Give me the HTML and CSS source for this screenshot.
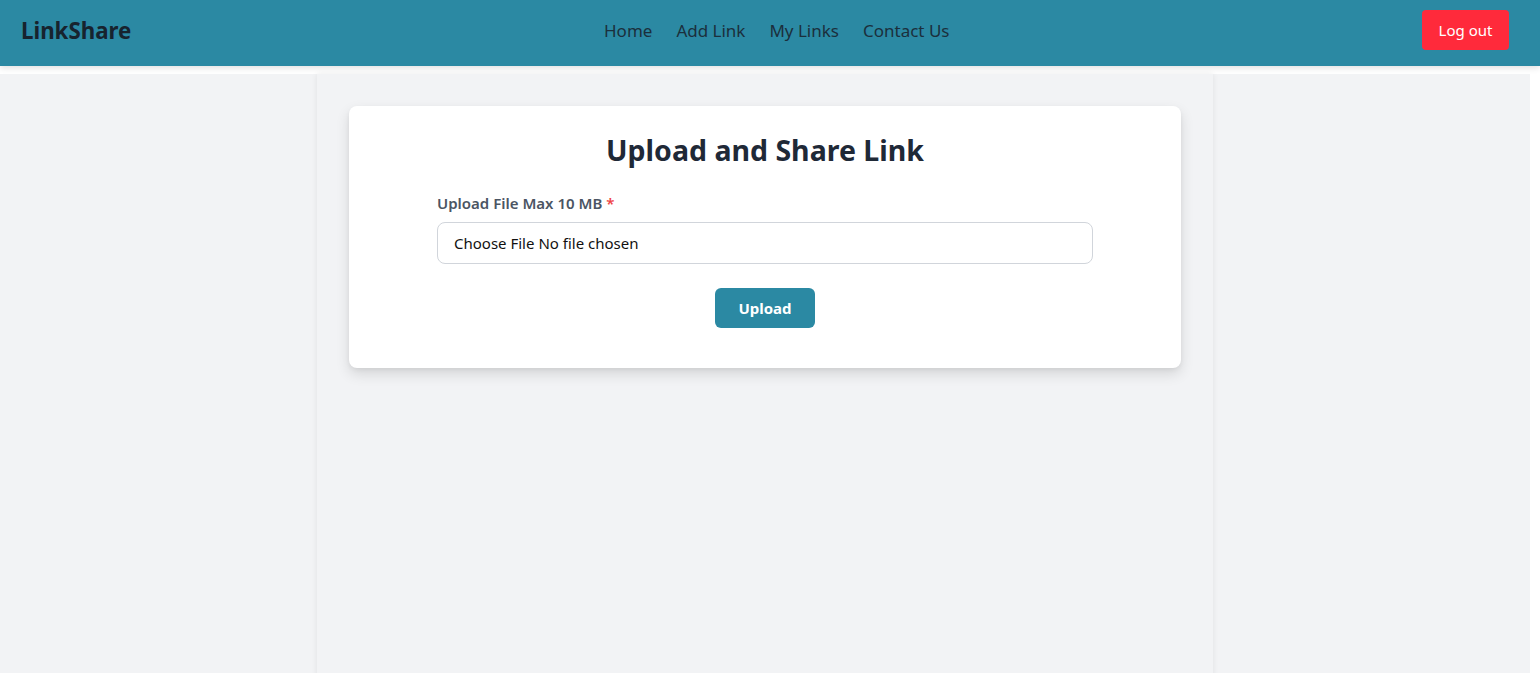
FILE: index.html
```html
<!DOCTYPE html>
<html lang="en">
<head>
<meta charset="utf-8">
<title>LinkShare</title>
<link rel="stylesheet" href="styles.css">
</head>
<body>
<header class="topbar">
  <div class="brand">LinkShare</div>
  <nav class="nav">
    <a href="#">Home</a>
    <a href="#">Add Link</a>
    <a href="#">My Links</a>
    <a href="#">Contact Us</a>
  </nav>
  <button class="logout">Log out</button>
</header>
<main class="page">
  <div class="column">
    <section class="card">
      <h1 class="title">Upload and Share Link</h1>
      <form class="form">
        <label class="label">Upload File Max 10 MB <span class="req">*</span></label>
        <div class="file-input"><span>Choose File</span> <span>No file chosen</span></div>
        <div class="actions"><button type="button" class="upload">Upload</button></div>
      </form>
    </section>
  </div>
</main>
</body>
</html>
```

FILE: styles.css
```css
* { box-sizing: border-box; }
html, body { margin: 0; padding: 0; height: 100%; }
body {
  background: #ffffff;
  font-family: "Noto Sans", "Open Sans", sans-serif;
  color: #1f2937;
  overflow: hidden;
}
.topbar {
  height: 66px;
  background: #2b89a3;
  display: flex;
  align-items: flex-start;
  padding: 10px 31px 0 21px;
  box-shadow: 0 2px 6px rgba(0,0,0,0.12);
  position: relative;
  z-index: 2;
}
.brand {
  height: 40px;
  line-height: 42px;
  font-size: 22.3px;
  font-weight: 700;
  color: #17232e;
  width: 200px;
}
.nav {
  display: flex;
  gap: 24px;
  height: 40px;
  align-items: center;
  margin-left: 383px;
}
.nav a {
  color: #1b2f3c;
  text-decoration: none;
  font-size: 17px;
}
.logout {
  margin-left: auto;
  height: 40px;
  width: 87px;
  background: #ff2a3b;
  color: #fff;
  border: 0;
  border-radius: 4px;
  font-family: inherit;
  font-size: 15px;
  padding: 0;
}
.page {
  margin-top: 8px;
  width: 1530px;
  height: 620px;
  background: #f2f3f5;
  display: flex;
  justify-content: center;
}
.column {
  width: 896px;
  background: #f2f3f5;
  box-shadow: 0 0 6px rgba(0,0,0,0.08);
  padding: 32px;
}
.card {
  background: #fff;
  border-radius: 8px;
  box-shadow: 0 6px 14px rgba(0,0,0,0.12), 0 2px 4px rgba(0,0,0,0.05);
  padding: 24px 88px 40px;
  height: 262px;
}
.title {
  margin: 0;
  text-align: center;
  font-size: 28.5px;
  font-weight: 700;
  color: #1f2937;
  line-height: 40px;
}
.form { margin-top: 23px; }
.label {
  display: block;
  font-size: 15px;
  font-weight: 600;
  color: #4b5563;
  line-height: 20px;
}
.req { color: #ef4444; }
.file-input {
  margin-top: 9px;
  height: 42px;
  border: 1px solid #d1d5db;
  border-radius: 8px;
  padding: 0 16px;
  display: flex;
  align-items: center;
  gap: 4px;
  font-size: 15px;
  color: #111;
}
.actions {
  display: flex;
  justify-content: center;
  margin-top: 24px;
}
.upload {
  width: 100px;
  height: 40px;
  background: #2b89a3;
  color: #fff;
  border: 0;
  border-radius: 6px;
  font-family: inherit;
  font-size: 15px;
  font-weight: 700;
}
```
